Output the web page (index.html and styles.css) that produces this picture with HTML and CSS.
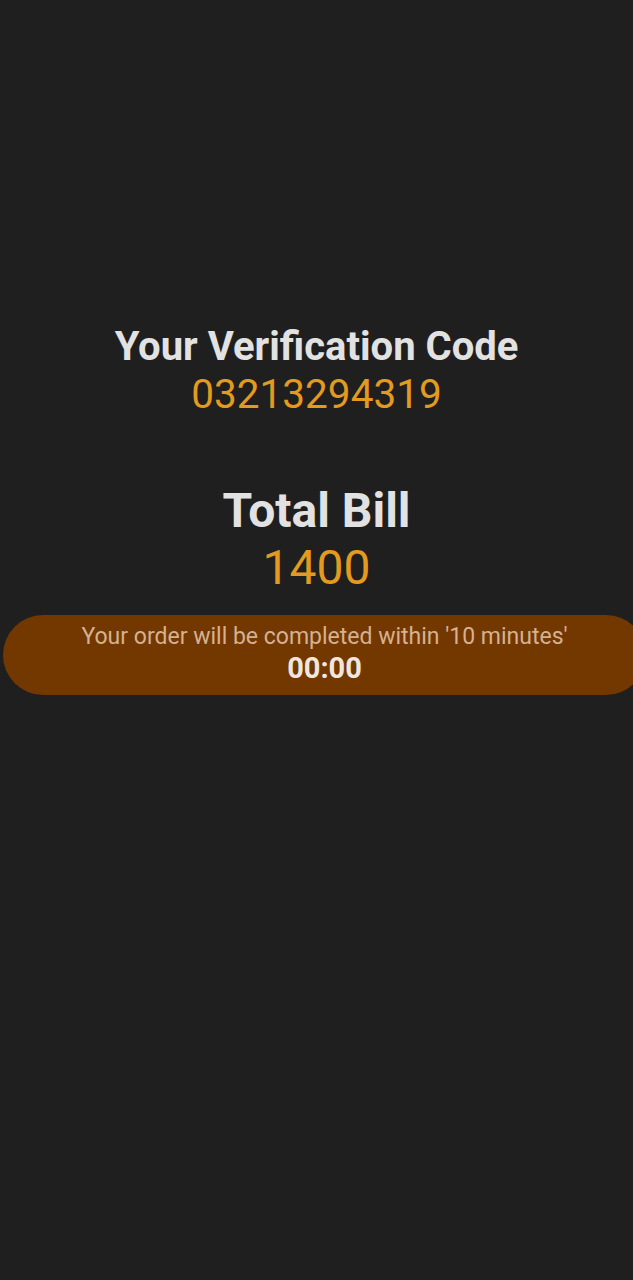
FILE: index.html
```html
<!DOCTYPE html>
<html>
<head>
<meta charset="utf-8">
<link rel="stylesheet" href="styles.css">
</head>
<body>
<main class="screen">
  <section class="block block-code">
    <h1 class="label label-code">Your Verification Code</h1>
    <div class="value value-code">03213294319</div>
  </section>
  <section class="block block-bill">
    <h2 class="label label-bill">Total Bill</h2>
    <div class="value value-bill">1400</div>
  </section>
  <div class="pill">
    <div class="pill-text">Your order will be completed within '10 minutes'</div>
    <div class="pill-timer">00:00</div>
  </div>
</main>
</body>
</html>
```
FILE: styles.css
```css
html, body {
  margin: 0;
  padding: 0;
  background: #1f1f1f;
}
body {
  width: 633px;
  height: 1280px;
  overflow: hidden;
  font-family: Roboto, "Noto Sans", sans-serif;
}
.screen {
  display: flex;
  flex-direction: column;
  padding-top: 324px;
}
.block {
  display: flex;
  flex-direction: column;
  align-items: center;
}
.label {
  margin: 0;
  color: #e2e2e2;
  font-weight: 700;
}
.label-code {
  font-size: 40px;
  line-height: 46px;
}
.value {
  color: #e29a1f;
  font-weight: 400;
}
.value-code {
  font-size: 40.5px;
  line-height: 46px;
  margin-top: 1px;
}
.block-bill {
  margin-top: 66px;
}
.label-bill {
  font-size: 48px;
  line-height: 56px;
}
.value-bill {
  font-size: 48px;
  line-height: 56px;
  margin-top: 1px;
}
.pill {
  margin-top: 19px;
  margin-left: 3px;
  width: 643px;
  height: 80px;
  box-sizing: border-box;
  padding-top: 9px;
  border-radius: 40px;
  background: #733700;
  display: flex;
  flex-direction: column;
  align-items: center;
  flex-shrink: 0;
}
.pill-text {
  color: #d6b18f;
  font-size: 23px;
  line-height: 26px;
}
.pill-timer {
  margin-top: 2px;
  color: #efe7df;
  font-size: 29px;
  line-height: 32px;
  font-weight: 700;
}
```
